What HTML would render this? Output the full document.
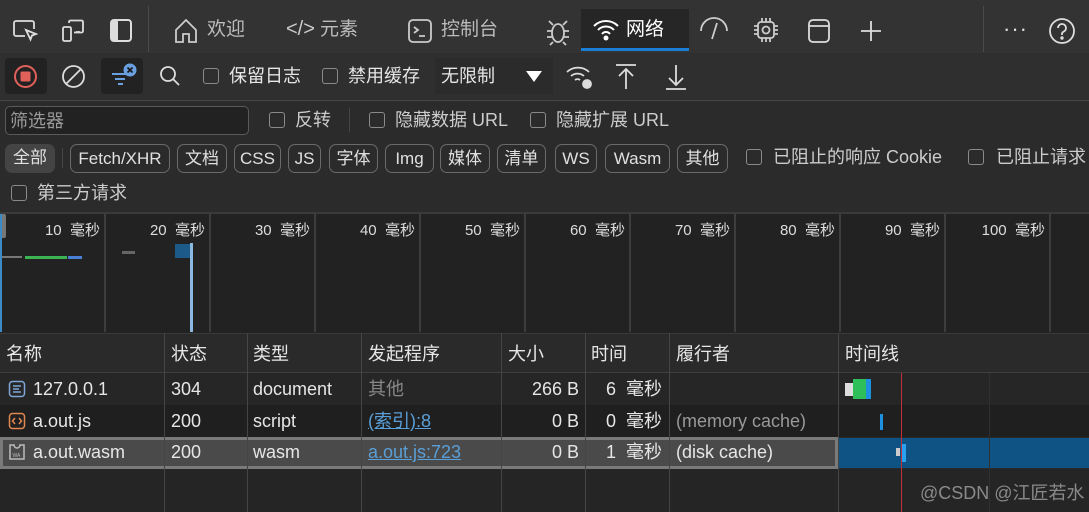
<!DOCTYPE html>
<html><head><meta charset="utf-8"><style>
*{margin:0;padding:0;box-sizing:border-box}
body{width:1089px;height:512px;overflow:hidden;background:#2a2a2a;font-family:"Liberation Sans","Noto Sans CJK SC",sans-serif;color:#e6e6e6;position:relative;font-size:18px}
.a{position:absolute}
.t{position:absolute;white-space:nowrap;line-height:1}
.cb{position:absolute;width:16px;height:16px;border:1.5px solid #8a8a8a;border-radius:3px}
.chip{position:absolute;top:144px;height:29px;border:1px solid #6a6a6a;border-radius:7px;font-size:17px;line-height:27px;text-align:center;color:#e0e0e0}
.vl{position:absolute;width:1px;background:#454545}
.ov{position:absolute;top:213px;height:119px;width:2px;background:#3d3d3d}
.ol{position:absolute;top:219px;font-size:15px;color:#ddd;text-align:right;width:100px}
.c{position:absolute;font-size:18px;line-height:1;white-space:nowrap}
svg{position:absolute}
</style></head><body>
<div class="a" style="left:0;top:0;width:1089px;height:53px;background:#333"></div>
<div class="a" style="left:0;top:53px;width:1089px;height:48px;background:#2f2f2f"></div>
<div class="a" style="left:0;top:100px;width:1089px;height:1px;background:#454545"></div>
<div class="a" style="left:0;top:101px;width:1089px;height:111px;background:#2b2b2b"></div>
<div class="vl" style="left:148px;top:6px;height:46px;background:#4a4a4a"></div>
<div class="vl" style="left:983px;top:6px;height:46px;background:#4a4a4a"></div>
<svg style="left:12px;top:18px" width="26" height="26" viewBox="0 0 26 26" fill="none" stroke="#ddd" stroke-width="1.8"><path d="M13 18H4a2 2 0 0 1-2-2V5a2 2 0 0 1 2-2h16a2 2 0 0 1 2 2v6"/><path d="M14 12l10 4-4 1.5-1.5 4z"/></svg>
<svg style="left:60px;top:18px" width="26" height="26" viewBox="0 0 26 26" fill="none" stroke="#ddd" stroke-width="1.8"><rect x="3" y="9" width="8" height="14" rx="1.5"/><path d="M9 5V4a1.5 1.5 0 0 1 1.5-1.5h11A1.5 1.5 0 0 1 23 4v9a1.5 1.5 0 0 1-1.5 1.5H14"/><path d="M16 14h4"/></svg>
<svg style="left:108px;top:18px" width="26" height="26" viewBox="0 0 26 26"><rect x="3" y="2" width="20" height="21" rx="3" fill="none" stroke="#ddd" stroke-width="2"/><rect x="3" y="2" width="7" height="21" rx="2" fill="#ddd"/></svg>
<svg style="left:171px;top:16px" width="30" height="30" viewBox="0 0 30 30" fill="none" stroke="#ccc" stroke-width="1.8"><path d="M5 14L15 4l10 10v12h-7v-8h-6v8H5z"/></svg>
<div class="t" style="left:207px;top:20px;color:#bbb;font-size:19px">欢迎</div>
<div class="t" style="left:286px;top:19px;color:#ccc;font-size:20px">&lt;/&gt;</div>
<div class="t" style="left:320px;top:20px;color:#bbb;font-size:19px">元素</div>
<svg style="left:406px;top:17px" width="28" height="28" viewBox="0 0 28 28" fill="none" stroke="#ccc" stroke-width="1.8"><rect x="3" y="3" width="22" height="22" rx="4"/><path d="M8 10l4 3-4 3M13 19h6"/></svg>
<div class="t" style="left:441px;top:20px;color:#bbb;font-size:19px">控制台</div>
<svg style="left:543px;top:16px" width="30" height="30" viewBox="0 0 30 30" fill="none" stroke="#ccc" stroke-width="1.8"><ellipse cx="15" cy="17" rx="6" ry="9"/><path d="M9 15H4M9 21H4M21 15h5M21 21h5M10 9L6 5M20 9l4-4M10 26l-3 3M20 26l3 3"/></svg>
<div class="a" style="left:581px;top:9px;width:108px;height:42px;background:#262626"></div>
<div class="a" style="left:581px;top:48px;width:108px;height:3px;background:#1a7fd4"></div>
<svg style="left:592px;top:18px" width="28" height="24" viewBox="0 0 28 24" fill="none" stroke="#fff" stroke-width="2"><path d="M2 8a17 17 0 0 1 24 0M6 12a11 11 0 0 1 16 0M10 16a5 5 0 0 1 8 0"/><circle cx="14" cy="20" r="1.5" fill="#fff"/></svg>
<div class="t" style="left:626px;top:20px;color:#fff;font-size:19px">网络</div>
<svg style="left:697px;top:17px" width="34" height="26" viewBox="0 0 34 26" fill="none" stroke="#ccc" stroke-width="1.8"><path d="M4 14a13 13 0 0 1 26 0"/><path d="M20 6l-5 16"/></svg>
<svg style="left:751px;top:15px" width="30" height="30" viewBox="0 0 30 30" fill="none" stroke="#ccc" stroke-width="1.8"><rect x="7" y="7" width="16" height="16" rx="3"/><circle cx="15" cy="15" r="3.5"/><path d="M11 3v4M15 3v4M19 3v4M11 23v4M15 23v4M19 23v4M3 11h4M3 15h4M3 19h4M23 11h4M23 15h4M23 19h4"/></svg>
<svg style="left:805px;top:17px" width="28" height="28" viewBox="0 0 28 28" fill="none" stroke="#ddd" stroke-width="1.8"><rect x="4" y="3" width="20" height="22" rx="4"/><path d="M4 9h20"/></svg>
<svg style="left:858px;top:18px" width="26" height="26" viewBox="0 0 26 26" stroke="#ddd" stroke-width="1.8"><path d="M13 3v20M3 13h20"/></svg>
<div class="t" style="left:1003px;top:18px;font-size:22px;color:#ddd;letter-spacing:1px">···</div>
<svg style="left:1047px;top:16px" width="30" height="30" viewBox="0 0 30 30" fill="none" stroke="#ddd" stroke-width="1.8"><circle cx="15" cy="15" r="12"/><path d="M11 12a4 4 0 1 1 5.5 3.7c-1 .5-1.5 1.3-1.5 2.3v1"/><circle cx="15" cy="22" r=".8" fill="#ddd"/></svg>
<div class="a" style="left:5px;top:58px;width:42px;height:36px;background:#222;border-radius:4px"></div>
<svg style="left:13px;top:64px" width="25" height="25" viewBox="0 0 25 25"><circle cx="12.5" cy="12.5" r="10.5" fill="none" stroke="#e0605a" stroke-width="2"/><rect x="7.5" y="7.5" width="10" height="10" rx="1.5" fill="#e0605a"/></svg>
<svg style="left:61px;top:64px" width="25" height="25" viewBox="0 0 25 25" fill="none" stroke="#ddd" stroke-width="1.8"><circle cx="12.5" cy="12.5" r="10.5"/><path d="M5 20L20 5"/></svg>
<div class="a" style="left:101px;top:58px;width:42px;height:36px;background:#222;border-radius:4px"></div>
<svg style="left:106px;top:58px" width="35" height="32" viewBox="0 0 35 32"><path d="M6 16h15M9 21h10M12 26h5" stroke="#6aa0e0" stroke-width="2"/><circle cx="24" cy="12" r="6.5" fill="#6aa0e0"/><path d="M21.5 9.5l5 5M26.5 9.5l-5 5" stroke="#1a1a1a" stroke-width="1.8"/></svg>
<svg style="left:158px;top:64px" width="24" height="24" viewBox="0 0 24 24" fill="none" stroke="#ddd" stroke-width="1.8"><circle cx="10" cy="10" r="7"/><path d="M15 15l6 6"/></svg>
<div class="cb" style="left:203px;top:68px"></div>
<div class="t" style="left:229px;top:67px">保留日志</div>
<div class="cb" style="left:322px;top:68px"></div>
<div class="t" style="left:348px;top:67px">禁用缓存</div>
<div class="a" style="left:435px;top:58px;width:118px;height:36px;background:#2b2b2b"></div>
<div class="t" style="left:441px;top:67px">无限制</div>
<svg style="left:524px;top:68px" width="20" height="16" viewBox="0 0 20 16"><path d="M2 3h16L10 14z" fill="#fff"/></svg>
<svg style="left:565px;top:63px" width="30" height="28" viewBox="0 0 30 28" fill="none" stroke="#ddd" stroke-width="1.8"><path d="M2 9a16 16 0 0 1 22 0M6 13a10 10 0 0 1 13 0M10 17a4 4 0 0 1 5 0"/><circle cx="22" cy="21" r="4" fill="#ddd"/></svg>
<svg style="left:614px;top:63px" width="24" height="28" viewBox="0 0 24 28" fill="none" stroke="#ddd" stroke-width="1.8"><path d="M2 2h20M12 6v20M5 13l7-7 7 7"/></svg>
<svg style="left:664px;top:63px" width="24" height="28" viewBox="0 0 24 28" fill="none" stroke="#ddd" stroke-width="1.8"><path d="M2 26h20M12 2v20M5 15l7 7 7-7"/></svg>
<div class="a" style="left:5px;top:106px;width:244px;height:29px;background:#222;border:1px solid #5a5a5a;border-radius:5px"></div>
<div class="t" style="left:10px;top:112px;color:#999">筛选器</div>
<div class="cb" style="left:269px;top:112px"></div>
<div class="t" style="left:295px;top:111px;color:#ccc">反转</div>
<div class="vl" style="left:349px;top:108px;height:24px"></div>
<div class="cb" style="left:369px;top:112px"></div>
<div class="t" style="left:395px;top:111px;color:#ccc">隐藏数据 URL</div>
<div class="cb" style="left:530px;top:112px"></div>
<div class="t" style="left:556px;top:111px;color:#ccc">隐藏扩展 URL</div>
<div class="chip" style="left:5px;width:50px;border:none;background:#444">全部</div>
<div class="vl" style="left:62px;top:148px;height:20px"></div>
<div class="chip" style="left:70px;width:100px">Fetch/XHR</div>
<div class="chip" style="left:177px;width:50px">文档</div>
<div class="chip" style="left:234px;width:47px">CSS</div>
<div class="chip" style="left:288px;width:33px">JS</div>
<div class="chip" style="left:329px;width:49px">字体</div>
<div class="chip" style="left:385px;width:49px">Img</div>
<div class="chip" style="left:440px;width:50px">媒体</div>
<div class="chip" style="left:497px;width:49px">清单</div>
<div class="chip" style="left:555px;width:42px">WS</div>
<div class="chip" style="left:605px;width:65px">Wasm</div>
<div class="chip" style="left:677px;width:51px">其他</div>
<div class="cb" style="left:746px;top:149px"></div>
<div class="t" style="left:773px;top:148px;color:#ccc">已阻止的响应 Cookie</div>
<div class="cb" style="left:968px;top:149px"></div>
<div class="t" style="left:996px;top:148px;color:#ccc">已阻止请求</div>
<div class="cb" style="left:11px;top:185px"></div>
<div class="t" style="left:37px;top:184px;color:#ccc">第三方请求</div>
<div class="a" style="left:0;top:212px;width:1089px;height:121px;background:#222;border-top:2px solid #3a3a3a"></div>
<div class="ov" style="left:104px"></div><div class="ov" style="left:209px"></div><div class="ov" style="left:314px"></div><div class="ov" style="left:419px"></div><div class="ov" style="left:524px"></div><div class="ov" style="left:629px"></div><div class="ov" style="left:734px"></div><div class="ov" style="left:839px"></div><div class="ov" style="left:944px"></div><div class="ov" style="left:1049px"></div>
<div class="ol" style="left:0">10&nbsp; 毫秒</div><div class="ol" style="left:105px">20&nbsp; 毫秒</div><div class="ol" style="left:210px">30&nbsp; 毫秒</div><div class="ol" style="left:315px">40&nbsp; 毫秒</div><div class="ol" style="left:420px">50&nbsp; 毫秒</div><div class="ol" style="left:525px">60&nbsp; 毫秒</div><div class="ol" style="left:630px">70&nbsp; 毫秒</div><div class="ol" style="left:735px">80&nbsp; 毫秒</div><div class="ol" style="left:840px">90&nbsp; 毫秒</div><div class="ol" style="left:945px">100&nbsp; 毫秒</div>
<div class="a" style="left:0;top:214px;width:6px;height:24px;background:#777;border-radius:2px"></div>
<div class="a" style="left:0;top:214px;width:2px;height:118px;background:#3b8bc7"></div>
<div class="a" style="left:2px;top:256px;width:20px;height:2px;background:#777"></div>
<div class="a" style="left:25px;top:256px;width:42px;height:3px;background:#3cb454"></div>
<div class="a" style="left:68px;top:256px;width:14px;height:3px;background:#4a7fd8"></div>
<div class="a" style="left:122px;top:251px;width:13px;height:3px;background:#666"></div>
<div class="a" style="left:175px;top:244px;width:16px;height:14px;background:#1c5a8a"></div>
<div class="a" style="left:190px;top:243px;width:3px;height:89px;background:#8ab8e0"></div>
<div class="a" style="left:0;top:333px;width:1089px;height:40px;background:#2a2a2a;border-top:1px solid #3a3a3a;border-bottom:1px solid #3f3f3f"></div>
<div class="a" style="left:0;top:373px;width:1089px;height:32px;background:#262626"></div>
<div class="a" style="left:0;top:405px;width:1089px;height:32px;background:#1f1f1f"></div>
<div class="a" style="left:0;top:437px;width:838px;height:32px;background:#4a4a4a;border:3px solid #7a7a7a"></div>
<div class="a" style="left:838px;top:438px;width:251px;height:30px;background:#0e5384"></div>
<div class="a" style="left:0;top:469px;width:1089px;height:43px;background:#252525"></div>
<div class="vl" style="left:164px;top:333px;height:179px"></div>
<div class="vl" style="left:247px;top:333px;height:179px"></div>
<div class="vl" style="left:361px;top:333px;height:179px"></div>
<div class="vl" style="left:501px;top:333px;height:179px"></div>
<div class="vl" style="left:585px;top:333px;height:179px"></div>
<div class="vl" style="left:669px;top:333px;height:179px"></div>
<div class="vl" style="left:838px;top:333px;height:179px"></div>
<div class="vl" style="left:989px;top:373px;height:139px;background:#303030"></div>
<div class="a" style="left:901px;top:373px;width:1px;height:139px;background:#c0303a"></div>
<div class="c" style="left:6px;top:345px">名称</div><div class="c" style="left:171px;top:345px">状态</div><div class="c" style="left:253px;top:345px">类型</div><div class="c" style="left:368px;top:345px">发起程序</div><div class="c" style="left:508px;top:345px">大小</div><div class="c" style="left:591px;top:345px">时间</div><div class="c" style="left:676px;top:345px">履行者</div><div class="c" style="left:845px;top:345px">时间线</div>
<svg style="left:8px;top:380px" width="18" height="18" viewBox="0 0 18 18" fill="none" stroke="#7fa6d6" stroke-width="1.5"><rect x="1.5" y="1.5" width="15" height="15" rx="3"/><path d="M5 6h8M5 9h6M5 12h8"/></svg>
<svg style="left:8px;top:412px" width="18" height="18" viewBox="0 0 18 18" fill="none" stroke="#e08850" stroke-width="1.5"><rect x="1.5" y="1.5" width="15" height="15" rx="3"/><path d="M7 6l-2.5 3L7 12M11 6l2.5 3L11 12"/></svg>
<svg style="left:8px;top:443px" width="18" height="18" viewBox="0 0 18 18" fill="none" stroke="#bbb" stroke-width="1.5"><path d="M2 2h4a3 3 0 0 0 6 0h4v14H2z"/><text x="4.5" y="14" font-size="5" fill="#bbb" stroke="none" font-family="Liberation Sans">WA</text></svg>
<div class="c" style="left:33px;top:380px">127.0.0.1</div><div class="c" style="left:171px;top:380px">304</div><div class="c" style="left:253px;top:380px">document</div><div class="c" style="left:368px;top:380px;color:#888">其他</div><div class="c" style="left:532px;top:380px">266 B</div><div class="c" style="left:606px;top:380px">6&nbsp; 毫秒</div>
<div class="c" style="left:33px;top:412px">a.out.js</div><div class="c" style="left:171px;top:412px">200</div><div class="c" style="left:253px;top:412px">script</div><div class="c" style="left:368px;top:412px;color:#5a9fd8;text-decoration:underline">(索引):8</div><div class="c" style="left:552px;top:412px">0 B</div><div class="c" style="left:606px;top:412px">0&nbsp; 毫秒</div><div class="c" style="left:676px;top:412px;color:#999">(memory cache)</div>
<div class="c" style="left:33px;top:443px">a.out.wasm</div><div class="c" style="left:171px;top:443px">200</div><div class="c" style="left:253px;top:443px">wasm</div><div class="c" style="left:368px;top:443px;color:#5a9fd8;text-decoration:underline">a.out.js:723</div><div class="c" style="left:552px;top:443px">0 B</div><div class="c" style="left:606px;top:443px">1&nbsp; 毫秒</div><div class="c" style="left:676px;top:443px">(disk cache)</div>
<div class="a" style="left:845px;top:383px;width:8px;height:13px;background:#ddd"></div>
<div class="a" style="left:853px;top:379px;width:14px;height:20px;background:#2fbf5a"></div>
<div class="a" style="left:866px;top:379px;width:5px;height:20px;background:#1e90e0"></div>
<div class="a" style="left:880px;top:414px;width:3px;height:16px;background:#1e90e0"></div>
<div class="a" style="left:896px;top:448px;width:4px;height:8px;background:#ccc"></div>
<div class="a" style="left:902px;top:444px;width:4px;height:18px;background:#2aa0f0"></div>
<div class="t" style="left:920px;top:484px;font-size:18px;color:#8a8a8a">@CSDN @江匠若水</div>
</body></html>
